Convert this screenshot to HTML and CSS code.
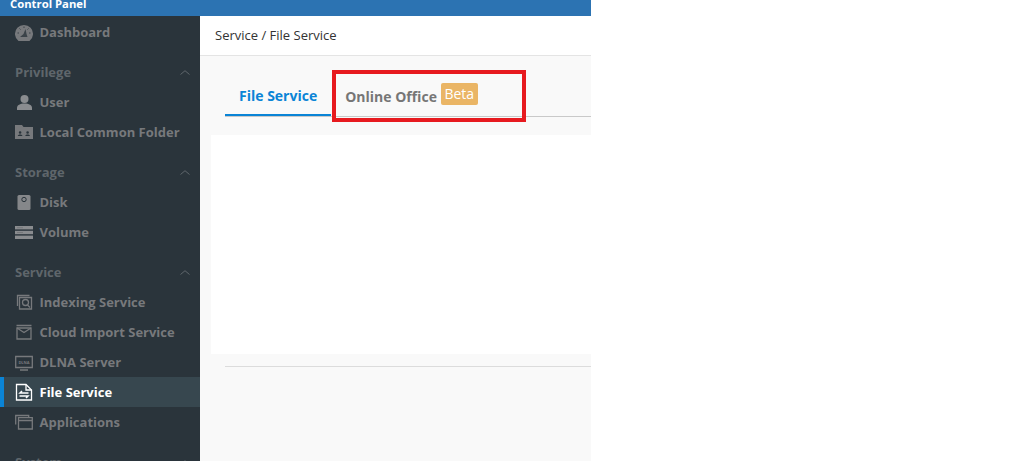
FILE: index.html
```html
<!DOCTYPE html>
<html lang="en">
<head>
<meta charset="utf-8">
<title>Control Panel</title>
<link rel="stylesheet" href="styles.css">
</head>
<body>
<div class="app">
  <header class="topbar"><span class="topbar-title">Control Panel</span></header>
  <div class="body">
    <nav class="sidebar">
      <a class="item">
        <svg class="icon" viewBox="0 0 18 18"><path d="M3.500 18A9 9 0 1 1 14.500 18z" fill="#77797c"/><path d="M10.500 6 8.500 11 5 14h7.500l-1-3z" fill="#3b4349"/><path d="M2.500 10h1.500M14 10h1.500M9 3.500V5M4.500 5.500l1 1M13.500 5.500l-1 1" stroke="#3b4349"/></svg>
        <span>Dashboard</span>
      </a>
      <div class="group first"><span>Privilege</span><svg class="chev" viewBox="0 0 10 5"><path d="M.5 4.500 5 .7l4.500 3.800" /></svg></div>
      <a class="item">
        <svg class="icon" viewBox="0 0 18 18"><circle cx="9.500" cy="6" r="4" fill="#8a8c8f"/><path d="M2 17v-2c0-3 3-4.500 7.500-4.500S17 12 17 15v2z" fill="#8a8c8f"/></svg>
        <span>User</span>
      </a>
      <a class="item">
        <svg class="icon" viewBox="0 0 18 18"><path d="M0 2h7l1.500 2H18v12H0z" fill="#77797c"/><path d="M3.800 9.500a1.300 1.300 0 1 1 2.600 0 1.300 1.300 0 1 1-2.600 0M2.800 13c0-1 1-1.500 2.300-1.500s2.300.5 2.300 1.500zM11.300 9.500a1.300 1.300 0 1 1 2.600 0 1.300 1.300 0 1 1-2.600 0M10.300 13c0-1 1-1.500 2.300-1.500s2.300.5 2.300 1.500z" fill="#2a343b"/></svg>
        <span>Local Common Folder</span>
      </a>
      <div class="group"><span>Storage</span><svg class="chev" viewBox="0 0 10 5"><path d="M.5 4.500 5 .7l4.500 3.800"/></svg></div>
      <a class="item">
        <svg class="icon" viewBox="0 0 18 18"><rect x="2.500" y="2" width="13" height="15" rx="1.500" fill="#85878a"/><circle cx="9" cy="6.500" r="2.200" fill="none" stroke="#2a343b"/></svg>
        <span>Disk</span>
      </a>
      <a class="item">
        <svg class="icon" viewBox="0 0 18 18"><rect y="3" width="18" height="3.400" fill="#8a8c8f"/><rect y="7.800" width="18" height="3.400" fill="#8a8c8f"/><rect y="12.600" width="18" height="3.400" fill="#8a8c8f"/><path d="M2 4.700h6M2 9.500h6" stroke="#6d7073" stroke-width=".7"/></svg>
        <span>Volume</span>
      </a>
      <div class="group"><span>Service</span><svg class="chev" viewBox="0 0 10 5"><path d="M.5 4.500 5 .7l4.500 3.800"/></svg></div>
      <a class="item">
        <svg class="icon stroke" viewBox="0 0 18 18"><path d="M2.500 13V2.500h12"/><path d="M4.500 4.500h12v11.500h-12z"/><circle cx="10.500" cy="9.500" r="3"/><path d="m12.500 12 2.500 2.500"/></svg>
        <span>Indexing Service</span>
      </a>
      <a class="item">
        <svg class="icon stroke" viewBox="0 0 18 18"><path d="M1.500 2.500h15M2 5h14v11H2z"/><path d="M2 5l7 4.500L16 5"/></svg>
        <span>Cloud Import Service</span>
      </a>
      <a class="item">
        <svg class="icon stroke" viewBox="0 0 18 18"><path d="M.7 3.500h16.600v11H.7zM5 17h8"/><text class="dlna" x="9" y="10.500">DLNA</text></svg>
        <span>DLNA Server</span>
      </a>
      <a class="item active">
        <svg class="icon stroke" viewBox="0 0 18 18"><path d="M1.500 1.500h9.500l5.500 5.500v10h-15z"/><path d="M11 1.500V7h5.500" /><path d="M13.500 10H5l2-2M4.500 13H13l-2 2" stroke-width="1.500"/></svg>
        <span>File Service</span>
      </a>
      <a class="item">
        <svg class="icon stroke" viewBox="0 0 18 18"><path d="M.7 11.500V2.500h13v2"/><path d="M3.500 4.700h13.800V16H3.500zM3.500 7.500h13.800"/></svg>
        <span>Applications</span>
      </a>
      <div class="group"><span>System</span><svg class="chev" viewBox="0 0 10 5"><path d="M.5 4.500 5 .7l4.500 3.800"/></svg></div>
    </nav>
    <main class="main">
      <div class="crumb">Service / File Service</div>
      <div class="content">
        <div class="tabs">
          <div class="tab on">File Service</div>
          <div class="tab">Online Office<span class="badge">Beta</span></div>
        </div>
        <div class="panel"></div>
        <div class="rule"></div>
        <div class="highlight"></div>
      </div>
    </main>
  </div>
</div>
</body>
</html>
```
FILE: styles.css
```css
* { box-sizing: border-box; }
html, body { margin: 0; height: 100%; background: #fff; overflow: hidden; }
body { font-family: "Open Sans", sans-serif; }
.app { width: 591px; height: 461px; display: flex; flex-direction: column; overflow: hidden; }
.topbar { height: 16px; flex: none; background: #2c73b2; padding-left: 10px; overflow: hidden; }
.topbar-title { display: block; margin-top: -5px; font-size: 11.300px; line-height: 18px; font-weight: 700; color: #fff; }
.body { flex: 1; display: flex; min-height: 0; }
.sidebar { width: 200px; flex: none; background: #2a343b; padding-top: 1px; overflow: hidden; }
.item { height: 30px; display: flex; align-items: center; gap: 6.500px; padding-left: 15px; font-size: 13px; font-weight: 700; color: #77797c; }
.item.active { background: #37474f; color: #fff; border-left: 4px solid #0a84d6; padding-left: 11px; }
.icon { width: 18px; height: 18px; flex: none; }
.stroke { fill: none; stroke: #77797c; stroke-width: 1.300; }
.active .stroke { stroke: #fff; }
.dlna { font-size: 4px; font-weight: 700; fill: #77797c; stroke: none; text-anchor: middle; }
.group { height: 30px; margin-top: 10px; display: flex; align-items: center; justify-content: space-between; padding: 0 10px 0 15px; font-size: 13px; font-weight: 700; color: #5f666b; }
.chev { width: 10px; height: 5px; fill: none; stroke: #5f666b; stroke-width: 1; }
.main { flex: 1; display: flex; flex-direction: column; min-width: 0; background: #f9f9f9; }
.crumb { height: 40px; flex: none; background: #fff; border-bottom: 1px solid #e4e4e4; padding: 0 0 1px 15px; display: flex; align-items: center; font-size: 13px; color: #333; }
.content { position: relative; flex: 1; }
.tabs { margin-left: 25px; height: 61px; display: flex; align-items: flex-end; border-bottom: 1px solid #c9c9c9; }
.tab { height: 30px; padding: 0 14px; display: flex; align-items: flex-start; font-size: 14px; font-weight: 700; line-height: 20px; color: #767676; margin-bottom: -1px; }
.tab.on { color: #0a84d6; border-bottom: 2px solid #0a84d6; margin-bottom: 0; }
.badge { margin-left: 4px; margin-top: -4px; height: 22px; padding: 0 3.500px; border-radius: 2px; background: #eab565; color: #fff; font-weight: 400; font-size: 14px; line-height: 22px; }
.panel { margin: 18px 0 0 11px; height: 219px; background: #fff; }
.rule { margin: 12px 0 0 25px; height: 1px; background: #dcdcdc; }
.highlight { position: absolute; left: 132px; top: 14px; width: 194px; height: 52px; border: 4px solid #e71a1f; }
```
